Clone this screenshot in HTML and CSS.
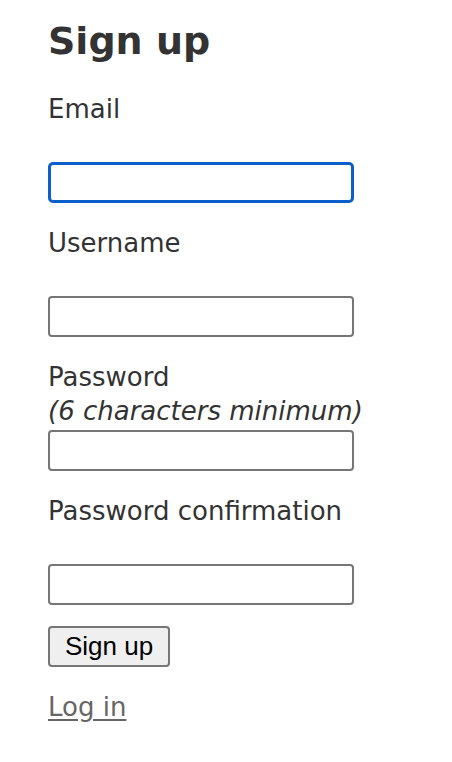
FILE: index.html
```html
<!DOCTYPE html>
<html>
<head>
<meta charset="utf-8">
<link rel="stylesheet" href="styles.css">
</head>
<body>
<main class="page">
  <h1 class="title">Sign up</h1>
  <form class="form">
    <div class="field">
      <label class="label">Email</label>
      <input class="input input-focus" type="email">
    </div>
    <div class="field">
      <label class="label">Username</label>
      <input class="input" type="text">
    </div>
    <div class="field">
      <label class="label">Password</label>
      <em class="hint">(6 characters minimum)</em>
      <input class="input input-tight" type="password">
    </div>
    <div class="field field-last">
      <label class="label">Password confirmation</label>
      <input class="input" type="password">
    </div>
    <div class="actions">
      <button class="btn" type="button">Sign up</button>
    </div>
  </form>
  <a class="link" href="#">Log in</a>
</main>
</body>
</html>
```

FILE: styles.css
```css
html, body {
  margin: 0;
  padding: 0;
  background: #fff;
}
.page {
  padding: 18px 0 0 48px;
  font-family: "DejaVu Sans", Verdana, sans-serif;
  font-size: 26px;
  line-height: 34px;
  color: #333;
}
.title {
  margin: 0 0 28px 0;
  font-size: 38px;
  line-height: 46px;
  font-weight: bold;
}
.form {
  display: flex;
  flex-direction: column;
}
.field {
  display: flex;
  flex-direction: column;
  align-items: flex-start;
  margin-bottom: 23px;
}
.field-last {
  margin-bottom: 21px;
}
.label {
  display: block;
}
.hint {
  display: block;
  font-style: italic;
}
.input {
  box-sizing: border-box;
  width: 306px;
  height: 41px;
  margin: 36px 0 0 0;
  border: 2px solid #767676;
  border-radius: 4px;
  background: #fff;
  padding: 0 6px;
  font-size: 16px;
}
.input-tight {
  margin-top: 2px;
}
.input-focus {
  border: 3px solid #0b5fcb;
  border-radius: 5px;
  outline: none;
}
.actions {
  display: flex;
}
.btn {
  box-sizing: border-box;
  height: 41px;
  width: 122px;
  padding: 0;
  border: 2px solid #767676;
  border-radius: 4px;
  background: #efefef;
  color: #000;
  font-family: "Liberation Sans", Arial, sans-serif;
  font-size: 26px;
}
.link {
  display: inline-block;
  margin-top: 23px;
  color: #666;
  text-decoration: underline;
  text-underline-offset: 3px;
}
```
